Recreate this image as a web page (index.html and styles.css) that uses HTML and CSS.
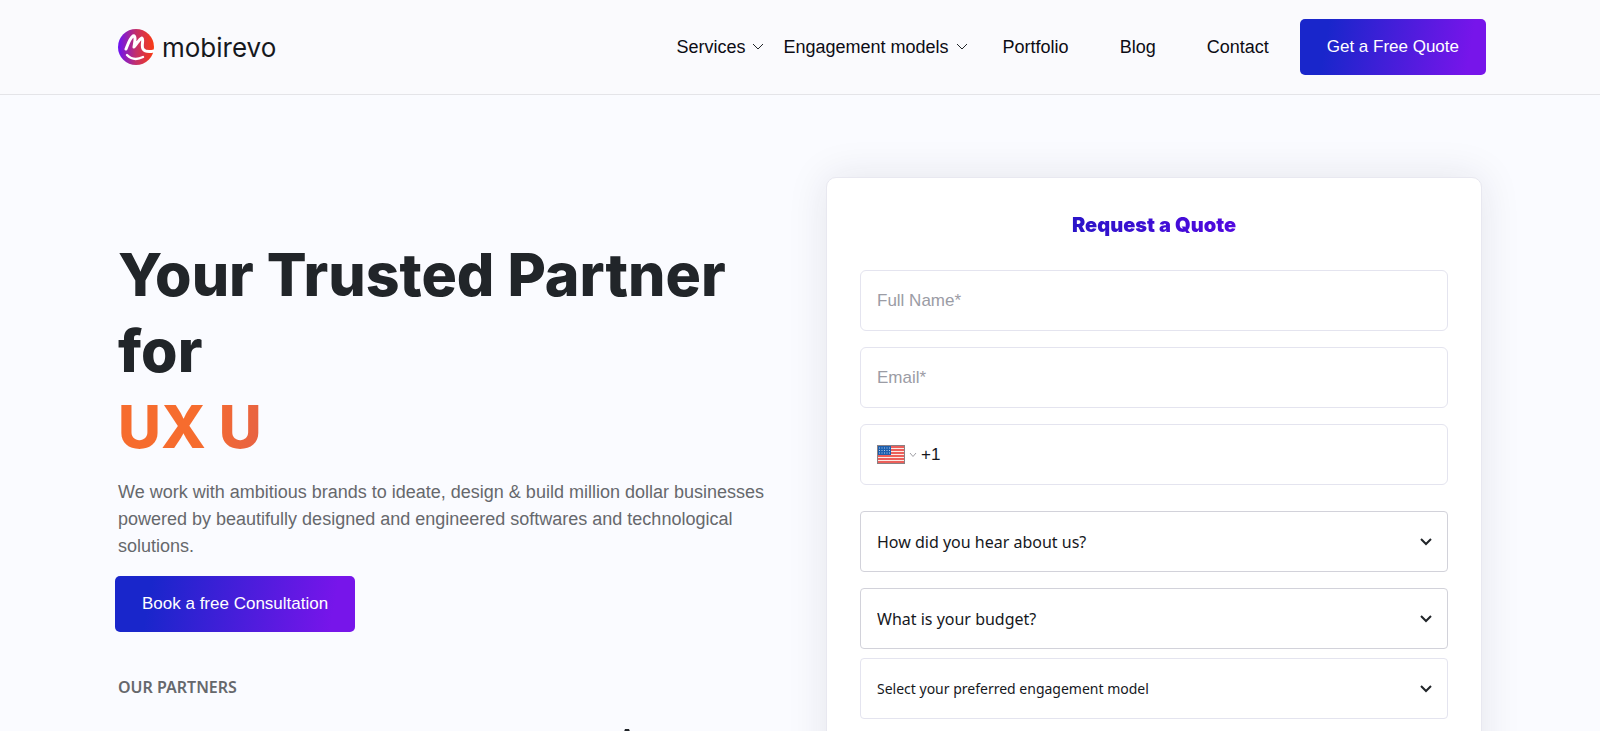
FILE: index.html
```html
<!DOCTYPE html>
<html lang="en">
<head>
    <meta charset="UTF-8">
    <meta name="viewport" content="width=device-width, initial-scale=1.0">
    <title>Mobirevo</title>
    <link rel="stylesheet" href="styles.css">
</head>
<body>
    <header class="header">
        <a href="#" class="logo">
            <svg width="36" height="36" viewBox="0 0 36 36" aria-hidden="true">
                <defs>
                    <linearGradient id="logoFill" x1="0" y1="0" x2="1" y2="0">
                        <stop offset="0" stop-color="#6a12f5"/>
                        <stop offset="0.5" stop-color="#c3306a"/>
                        <stop offset="1" stop-color="#fa3a12"/>
                    </linearGradient>
                </defs>
                <circle cx="18" cy="18" r="18" fill="url(#logoFill)"/>
                <path d="M8 20 C10 15 12 9 15 7 C18 6 17 12 16 18 C19 15 21 10 24 9 C26 10 23 17 25 20 C27 23 31 23 36 22" fill="none" stroke="#fff" stroke-width="3" stroke-linecap="round" stroke-linejoin="round"/>
                <path d="M9 26 C13 30 19 31 25 28" fill="none" stroke="#fff" stroke-width="2.4" stroke-linecap="round"/>
            </svg>
            <span>mobirevo</span>
        </a>

        <div class="menu">
            <nav class="nav">
                <a href="#">Services
                    <svg width="12" height="8" viewBox="0 0 12 8"><path d="M1 1 L6 6 L11 1"/></svg>
                </a>
                <a href="#">Engagement models
                    <svg width="12" height="8" viewBox="0 0 12 8"><path d="M1 1 L6 6 L11 1"/></svg>
                </a>
                <a href="#" class="plain">Portfolio</a>
                <a href="#" class="plain">Blog</a>
                <a href="#" class="plain">Contact</a>
            </nav>
            <button type="button" class="btn">Get a Free Quote</button>
        </div>
    </header>

    <main class="hero">
        <section class="intro">
            <h1>Your Trusted Partner for <span class="typed">UX U</span></h1>
            <p>We work with ambitious brands to ideate, design &amp; build million dollar businesses powered by beautifully designed and engineered softwares and technological solutions.</p>
            <button type="button" class="btn btn-book">Book a free Consultation</button>
            <h2>OUR PARTNERS</h2>
            <div class="partners">
                <svg width="24" height="24" viewBox="0 0 24 24" aria-hidden="true"><path d="M10 0 H14 L22 22 H2 Z" fill="#212529"/></svg>
            </div>
        </section>

        <!-- Quote form -->
        <form class="quote">
            <h3><span>Request a Quote</span></h3>
            <input type="text" class="field" placeholder="Full Name*" aria-label="Full Name">
            <input type="email" class="field" placeholder="Email*" aria-label="Email">
            <div class="field phone">
                <button type="button" class="country" aria-label="Country">
                    <svg width="28" height="19" viewBox="0 0 28 19">
                        <rect width="28" height="19" fill="#fbe9e4"/>
                        <path d="M0 2 H28 M0 5 H28 M0 8 H28 M0 11 H28 M0 14 H28 M0 17 H28" stroke="#e8322c" stroke-width="1.4"/>
                        <rect x="1" y="1" width="13" height="9" fill="#1c5fae"/>
                        <path d="M2 3 H13 M2 5.5 H13 M2 8 H13" stroke="#b5cdec" stroke-width="1" stroke-dasharray="1 1.5"/>
                        <rect x="0.5" y="0.5" width="27" height="18" fill="none" stroke="#8a8084"/>
                    </svg>
                    <svg width="8" height="6" viewBox="0 0 8 6"><path d="M1 1 L4 4.5 L7 1" fill="none" stroke="#a0a0a6"/></svg>
                </button>
                <input type="tel" value="+1" aria-label="Phone">
            </div>
            <div class="select select-first">
                <select class="field" aria-label="How did you hear about us?">
                    <option>How did you hear about us?</option>
                </select>
                <svg width="12" height="8" viewBox="0 0 12 8"><path d="M1 1 L6 6 L11 1"/></svg>
            </div>
            <div class="select">
                <select class="field" aria-label="What is your budget?">
                    <option>What is your budget?</option>
                </select>
                <svg width="12" height="8" viewBox="0 0 12 8"><path d="M1 1 L6 6 L11 1"/></svg>
            </div>
            <div class="select select-model">
                <select class="field" aria-label="Preferred engagement model">
                    <option>Select your preferred engagement model</option>
                </select>
                <svg width="12" height="8" viewBox="0 0 12 8"><path d="M1 1 L6 6 L11 1"/></svg>
            </div>
        </form>
    </main>
</body>
</html>
```
FILE: styles.css
```css
* {
    box-sizing: border-box;
}

body {
    margin: 0;
    background-color: #fafbff;
    color: #212529;
    font-family: "Liberation Sans", Arial, sans-serif;
}

/* Header */
.header {
    display: flex;
    justify-content: space-between;
    align-items: center;
    padding: 19px 114px 19px 118px;
    background-color: #fafafd;
    border-bottom: 1px solid #e4e4e8;
}

.logo {
    display: flex;
    align-items: center;
    gap: 8px;
    color: #16181d;
    font-family: Inter, sans-serif;
    font-size: 26px;
    text-decoration: none;
}

.menu {
    display: flex;
    align-items: center;
    gap: 15px;
}

.nav {
    display: flex;
    align-items: center;
    gap: 19px;
}

.nav a {
    display: flex;
    align-items: center;
    gap: 7px;
    color: #0c0c14;
    font-size: 18px;
    text-decoration: none;
}

.nav .plain {
    padding: 0 16px;
}

.nav svg,
.select svg {
    fill: none;
    stroke: #212529;
}

.btn {
    height: 56px;
    padding: 0 27px;
    border: none;
    border-radius: 5px;
    background: linear-gradient(100deg, #1926cb 15%, #7715ea 90%);
    color: #fff;
    font-family: inherit;
    font-size: 17px;
    cursor: pointer;
}

/* Hero */
.hero {
    display: grid;
    grid-template-columns: 1fr 656px;
    gap: 40px;
    padding: 82px 118px 0;
}

.intro {
    padding-top: 60px;
}

h1 {
    margin: 0;
    font-family: Inter, sans-serif;
    font-size: 59px;
    font-weight: 800;
    line-height: 76px;
}

.typed {
    display: block;
    background: linear-gradient(100deg, #f66c2e 13%, #6a12f5 100%);
    background-clip: text;
    -webkit-background-clip: text;
    color: transparent;
}

.intro p {
    margin: 14px 0 16px;
    color: #66686c;
    font-size: 18px;
    line-height: 27px;
}

.btn-book {
    margin-left: -3px;
}

.intro h2 {
    margin: 43px 0 30px;
    color: #66686c;
    font-family: "Noto Sans", sans-serif;
    font-size: 16px;
    font-weight: 600;
    line-height: 24px;
}

.partners {
    padding-left: 497px;
}

/* Quote form */
.quote {
    padding: 33px 33px 60px;
    border: 1px solid #e8e8f0;
    border-radius: 10px;
    background-color: #fff;
    box-shadow: 0 0 40px rgba(30, 30, 60, 0.1);
}

.quote h3 {
    margin: 0 0 31px;
    font-family: Inter, sans-serif;
    font-size: 20px;
    font-weight: 900;
    line-height: 28px;
    text-align: center;
}

.quote h3 span {
    background: linear-gradient(90deg, #2a14c8, #5208e0);
    background-clip: text;
    -webkit-background-clip: text;
    color: transparent;
}

.field {
    display: block;
    width: 100%;
    height: 61px;
    margin-bottom: 16px;
    padding: 0 16px;
    border: 1px solid #e4e4ef;
    border-radius: 6px;
    background-color: #fff;
    color: #16181d;
    font-family: inherit;
    font-size: 17px;
}

.field::placeholder {
    color: #9b9ca5;
}

.phone {
    display: flex;
    align-items: center;
    gap: 4px;
}

.phone input {
    flex: 1;
    min-width: 0;
    padding: 0;
    border: none;
    color: #16181d;
    font-family: inherit;
    font-size: 17px;
}

.country {
    display: flex;
    align-items: center;
    gap: 4px;
    padding: 0;
    border: none;
    background: none;
}

.select {
    position: relative;
}

.select-first {
    margin-top: 26px;
}

.select .field {
    border-color: #d2d2da;
    border-radius: 4px;
    font-family: "Noto Sans", sans-serif;
    font-size: 16px;
    appearance: none;
}

.select svg {
    position: absolute;
    top: 27px;
    right: 16px;
    stroke-width: 2;
}

.select-model {
    margin-top: -7px;
}

.select-model .field {
    border-color: #e4e4ef;
    font-size: 14px;
}
```
